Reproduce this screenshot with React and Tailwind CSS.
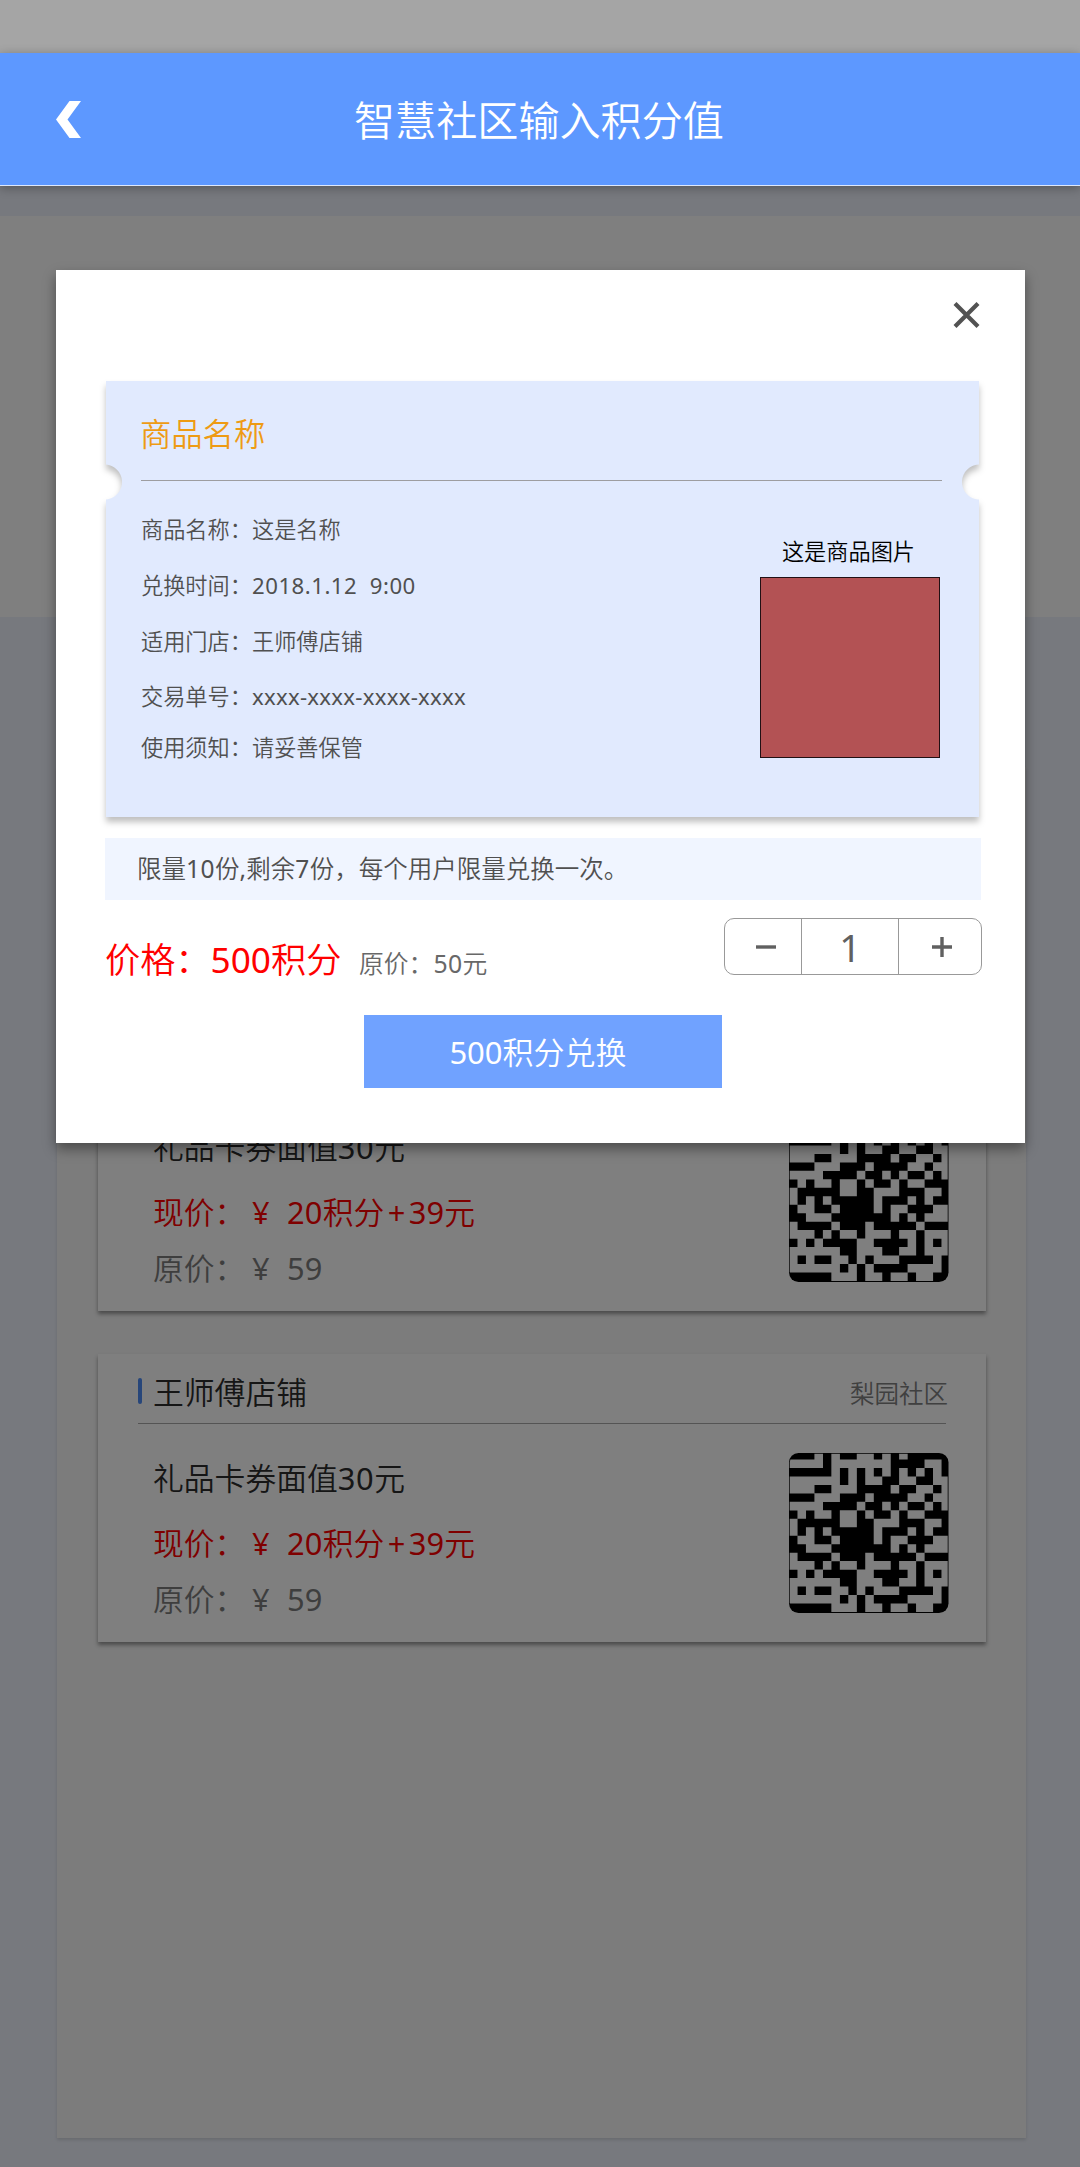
const QR_ROWS = [
  "0001010011010100000",
  "1111011111110000110",
  "0000010101010101010",
  "1111110101100110011",
  "1110011100001001101",
  "0001110001000011011",
  "1111000010010100101",
  "0101101101001011000",
  "1000001100111000110",
  "1010100000100010100",
  "0110010000101100011",
  "0011100000001010111",
  "1000010001000001000",
  "1110101101110110111",
  "0101000011000010101",
  "1111110011100110111",
  "1010011010111000010",
  "1111110101000011110",
  "0000011101101101100",
];
const CELL = 8.47;

// One path for every light module, slightly overlapped so neighbours join without seams.
const QR_PATH = QR_ROWS.flatMap((row, r) =>
  row.split("").map((c, i) => (c === "1" ? `M${i * CELL} ${r * CELL - 2}h${CELL + 0.1}v${CELL + 0.1}h${-CELL - 0.1}z` : ""))
).join("");

// Latin runs carry a heavier weight than the Chinese text around them.
function Num({ children, className = "tracking-[0.2px]" }) {
  return <span className={`font-normal ${className}`}>{children}</span>;
}

function QrCode() {
  return (
    <svg className="absolute left-[691px] top-[99px] h-[160px] w-[160px]" viewBox="0 0 160 160">
      <defs>
        <clipPath id="qr-clip">
          <rect x="0.7" y="0.7" width="158" height="158.4" rx="9" />
        </clipPath>
      </defs>
      <rect x="0" y="0" width="159.5" height="160" rx="9.5" fill="#000" />
      <path clipPath="url(#qr-clip)" d={QR_PATH} fill="#fff" />
    </svg>
  );
}

function CouponCard() {
  return (
    <section className="relative h-[288px] w-[888px] bg-white px-10 shadow-[0_3px_4px_rgba(0,0,0,0.4)]">
      <div className="flex h-[70px] items-center justify-between border-b border-[#a8a8a8] pt-[6px]">
        <div className="flex items-center gap-[11px]">
          <span className="h-[26px] w-1 rounded-sm bg-[#4f8cf5]" />
          <h2 className="pt-px text-[30.8px] leading-none text-[#2c2c2c]">王师傅店铺</h2>
        </div>
        <span className="-mr-[2px] pt-[5px] text-[24.5px] leading-none text-[#808080]">梨园社区</span>
      </div>
      <div className="flex flex-col pl-[15px] text-[30.8px] leading-[40px]">
        <p className="mt-[34px] text-[#2c2c2c]">礼品卡券面值<Num className="tracking-[0.6px]">30</Num>元</p>
        <p className="mt-[25px] flex text-[#f00]">
          <span className="w-[99px]">现价：</span>
          <span className="w-[35px] font-normal">¥</span>
          <span><Num className="tracking-[0.2px]">20</Num>积分<Num className="px-[3.4px]">+</Num><Num className="tracking-[0.2px]">39</Num>元</span>
        </p>
        <p className="mt-[16px] flex text-[#7c7c7c]">
          <span className="w-[99px]">原价：</span>
          <span className="w-[35px] font-normal">¥</span>
          <Num>59</Num>
        </p>
      </div>
      <QrCode />
    </section>
  );
}

function Ticket() {
  const rows = [
    ["商品名称：", "这是名称", "h-[56px]", ""],
    ["兑换时间：", "2018.1.12\u00a0\u00a09:00", "h-[55px]", "font-normal tracking-[0.5px]"],
    ["适用门店：", "王师傅店铺", "h-[57px]", ""],
    ["交易单号：", "xxxx-xxxx-xxxx-xxxx", "h-[53px]", "font-normal tracking-[0.25px]"],
    ["使用须知：", "请妥善保管", "h-[49px]", ""],
  ];
  return (
    <section className="relative ml-[50px] h-[436px] w-[873px]">
      <div className="absolute inset-0 drop-shadow-[0_5px_3px_rgba(0,0,0,0.25)]">
        <div className="h-full w-full bg-[#e1eafe] [mask-image:radial-gradient(circle_at_-1.5px_101px,transparent_17px,black_18px),radial-gradient(circle_at_873.5px_101px,transparent_17px,black_18px)] [mask-composite:intersect]" />
      </div>
      <div className="relative pl-[35px] pr-[37px]">
        <h2 className="flex h-[100px] items-center border-b border-[#9d9da0] pt-2 text-[31.3px] leading-none text-[#ee9b14]">
          <span className="-ml-px">商品名称</span>
        </h2>
        <div className="flex justify-between">
          <dl className="pt-[21px] text-[22.2px] text-[#505050]">
            {rows.map(([label, value, h, tracking]) => (
              <div key={label} className={`flex items-center ${h}`}>
                <dt className="w-[111px]">{label}</dt>
                <dd className={tracking}>{value}</dd>
              </div>
            ))}
          </dl>
          <figure className="mr-[2px] mt-[55px] flex w-[180px] flex-col items-center">
            <figcaption className="mr-[3px] text-[22.2px] leading-[32px] text-black">这是商品图片</figcaption>
            <div className="mt-[9px] h-[181px] w-[180px] border border-[#211014] bg-[#b35254]" />
          </figure>
        </div>
      </div>
    </section>
  );
}

function Modal() {
  return (
    <div className="absolute left-[56px] top-[270px] h-[873px] w-[969px] bg-white pt-[111px] shadow-[0_6px_12px_rgba(0,0,0,0.4)]">
      <svg className="absolute left-[897px] top-[32px] h-[26px] w-[27px]" viewBox="0 0 27 26" stroke="#525252" strokeWidth="4.2">
        <path d="M2 1.5 25 24.5M25 1.5 2 24.5" />
      </svg>
      <Ticket />
      <p className="ml-[49px] mt-[21px] flex h-[62px] w-[876px] items-center bg-[#f0f5ff] pl-8 text-[24.5px] leading-none text-[#505050]">
        <span>限量<Num className="tracking-[0.5px]">10</Num>份<Num>,</Num>剩余<Num className="tracking-[0.5px]">7</Num>份，每个用户限量兑换一次。</span>
      </p>
      <div className="ml-[49px] mt-[18px] flex h-[57px] w-[877px] justify-between">
        <div className="flex items-baseline pt-[16px]">
          <span className="w-[254px] text-[35.2px] leading-[50px] text-[#f00]">价格：<Num className="tracking-normal">500</Num>积分</span>
          <span className="text-[24.8px] text-[#686868]">原价：<Num className="tracking-[0.4px]">50</Num>元</span>
        </div>
        <div className="flex w-[258px] rounded-[10px] border border-[#999] text-[#606060]">
          <button className="flex w-[77px] items-center justify-center border-r border-[#999] pl-[5px]">
            <svg className="h-5 w-5" viewBox="0 0 20 20" stroke="currentColor" strokeWidth="3.4"><path d="M0 10H20" /></svg>
          </button>
          <span className="flex w-[97px] items-center justify-center border-r border-[#999] text-[38px] font-normal leading-none">1</span>
          <button className="flex flex-1 items-center justify-center pl-1">
            <svg className="h-5 w-5" viewBox="0 0 20 20" stroke="currentColor" strokeWidth="3.4"><path d="M0 10H20M10 0V20" /></svg>
          </button>
        </div>
      </div>
      <button className="ml-[308px] mt-[40px] flex h-[73px] w-[358px] items-center justify-center bg-[#70a2ff] pr-[10px] pt-[2px] text-[31px] text-white">
        <span><Num className="tracking-normal">500</Num>积分兑换</span>
      </button>
    </div>
  );
}

export default function App() {
  return (
    <div className="relative h-[2167px] w-[1080px] overflow-hidden bg-[#eef2fc] font-['Noto_Sans','Noto_Sans_CJK_SC',sans-serif] font-[350]">
      <div className="h-[53px] bg-[#a5a5a5]" />
      <header className="relative z-20 flex h-[133px] items-center border-b border-[#dde8fc] bg-[#5d98ff] shadow-[0_2px_10px_rgba(0,0,0,0.3)]">
        <svg className="ml-[56px] h-[37px] w-[25px]" viewBox="0 0 25 37" fill="#fff">
          <path d="M13.5 0H25L11.5 18.5 25 37H13.5L0 18.5Z" />
        </svg>
        <h1 className="ml-[273px] pt-[3px] text-[41.1px] leading-none text-white">智慧社区输入积分值</h1>
      </header>
      <div className="mt-[30px] h-[401px] bg-white" />
      <main className="ml-[57px] mt-[150px] flex h-[1371px] w-[969px] flex-col gap-[43px] bg-[#f8f8f8] pl-[41px] pt-[256px] shadow-[0_2px_3px_rgba(0,0,0,0.12)]">
        <CouponCard />
        <CouponCard />
      </main>
      <div className="absolute inset-x-0 bottom-0 top-[186px] z-10 bg-black/50" />
      <div className="absolute left-0 top-0 z-30"><Modal /></div>
    </div>
  );
}
